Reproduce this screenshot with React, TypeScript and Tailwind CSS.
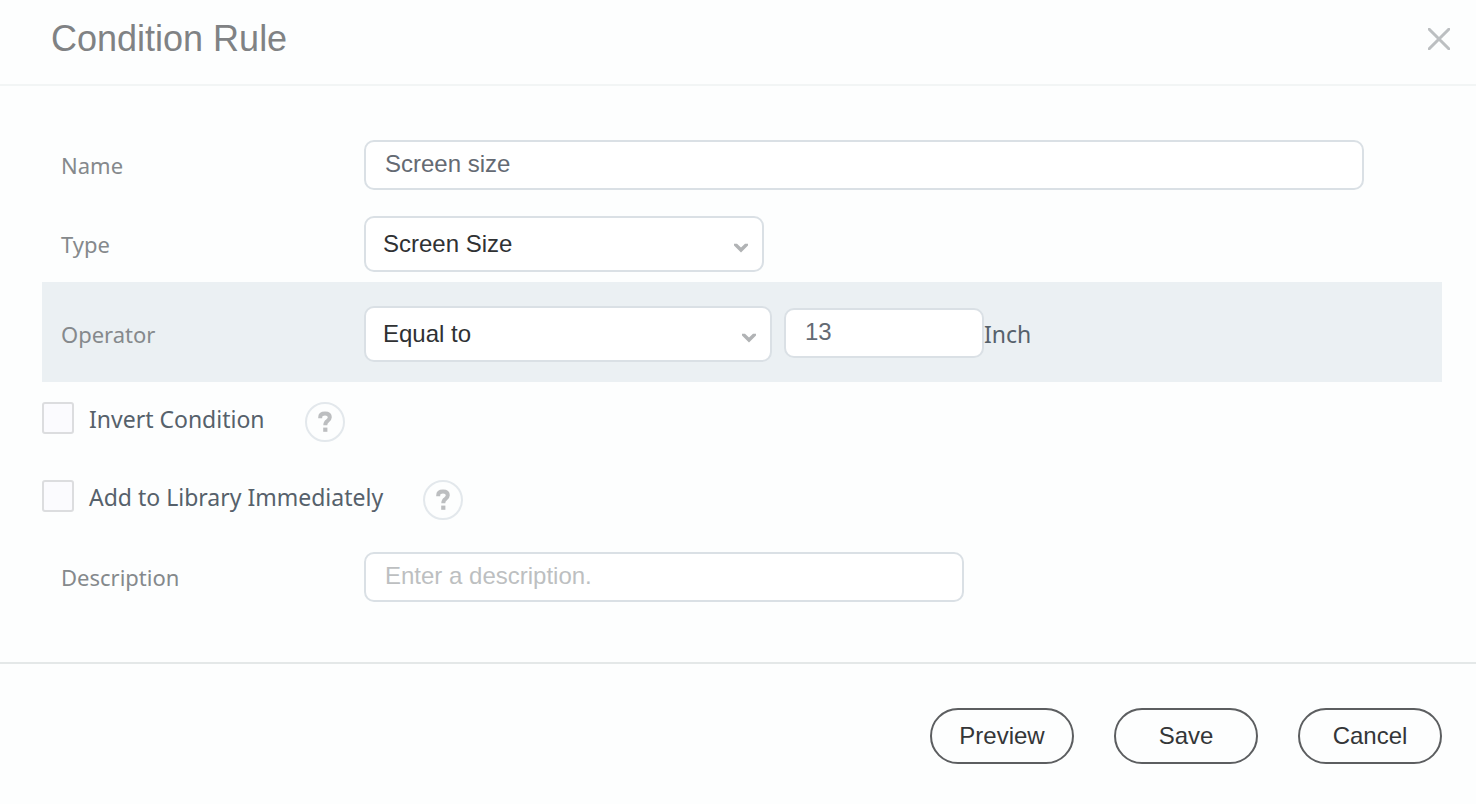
import React from 'react';

const labelFont = "font-['Noto_Sans',sans-serif]";

const inputClass =
  'h-[50px] min-w-0 rounded-[10px] border-2 border-[#dae0e5] bg-white px-[19px] pb-0.5 text-2xl text-[#646a73] placeholder:text-[#bdbfc1] placeholder:opacity-100 outline-none focus:border-[#b4c0c9]';

interface FieldLabelProps {
  htmlFor: string;
  children: React.ReactNode;
}

const FieldLabel: React.FC<FieldLabelProps> = ({ htmlFor, children }) => (
  <label
    htmlFor={htmlFor}
    className={`${labelFont} w-[303px] shrink-0 text-[22px] leading-8 text-[#85898c]`}
  >
    {children}
  </label>
);

interface SelectFieldProps {
  id: string;
  options: string[];
  className: string;
}

const SelectField: React.FC<SelectFieldProps> = ({ id, options, className }) => (
  <div className={`relative min-w-0 ${className}`}>
    <select
      id={id}
      className="h-14 w-full appearance-none rounded-[10px] border-2 border-[#dae0e5] bg-white pl-[17px] pr-12 text-2xl text-[#2f3133] outline-none focus:border-[#b4c0c9]"
    >
      {options.map((option) => (
        <option key={option}>{option}</option>
      ))}
    </select>
    <svg
      viewBox="0 0 16 10"
      className="pointer-events-none absolute right-[15px] top-[27px] h-2.5 w-4"
      aria-hidden="true"
    >
      <path d="M1 0.800H4L8 4.600 12 0.800H15V2.600L8 9.400 1 2.600Z" fill="#b1b3b5" />
    </svg>
  </div>
);

interface CheckRowProps {
  id: string;
  label: string;
  helpLabel: string;
}

const CheckRow: React.FC<CheckRowProps> = ({ id, label, helpLabel }) => (
  <div className="flex h-10 items-start">
    <input
      id={id}
      type="checkbox"
      className="h-8 w-8 shrink-0 appearance-none rounded-[3px] border-2 border-[#dcdddf] bg-[#fbfbfe] checked:bg-[#646a73]"
    />
    <label
      htmlFor={id}
      className={`${labelFont} ml-[15px] mr-10 text-[23px] leading-[34px] text-[#56616b]`}
    >
      {label}
    </label>
    <button
      type="button"
      aria-label={helpLabel}
      className="flex h-10 w-10 shrink-0 items-center justify-center rounded-full border-2 border-[#e3e8ec] bg-[#fdfefe]"
    >
      <svg viewBox="0 0 14 22" className="h-[22px] w-3.5" fill="none" aria-hidden="true">
        <path
          d="M2.200 7.200V6.500C2.200 3.800 4.200 2.600 7 2.600s4.800 1.300 4.800 3.700c0 2-1.100 2.900-2.500 3.900C7.800 11.200 7.300 12 7.300 14.200"
          stroke="#bcbec0"
          strokeWidth="4"
        />
        <rect x="5.200" y="16.600" width="4.200" height="4.200" fill="#bcbec0" />
      </svg>
    </button>
  </div>
);

const footerButtons = ['Preview', 'Save', 'Cancel'];

export default function App() {
  return (
    <div className="min-h-screen bg-[#fdfefe] font-['Liberation_Sans',Arial,sans-serif]">
      <header className="flex items-start justify-between border-b-2 border-[#f2f5f5] pb-[22px] pl-[51px] pr-6 pt-4">
        <h1 className="text-4xl leading-[46px] text-[#808284]">Condition Rule</h1>
        <button type="button" aria-label="Close" className="mt-2.5 p-0.5">
          <svg
            viewBox="0 0 22 22"
            className="h-[22px] w-[22px]"
            fill="none"
            stroke="#bcbfc1"
            strokeWidth="3"
            strokeLinecap="round"
            aria-hidden="true"
          >
            <path d="M1.200 1.200 20.800 20.800M20.800 1.200 1.200 20.800" />
          </svg>
        </button>
      </header>

      <form onSubmit={(e) => e.preventDefault()}>
        <div className="pb-[60px] pl-[42px] pr-[34px] pt-[54px]">
          <div className="flex items-center pl-[19px]">
            <FieldLabel htmlFor="name">Name</FieldLabel>
            <input
              id="name"
              type="text"
              defaultValue="Screen size"
              className={`${inputClass} mr-[78px] flex-1`}
            />
          </div>

          <div className="mt-[26px] flex items-center pl-[19px]">
            <FieldLabel htmlFor="type">Type</FieldLabel>
            <SelectField
              id="type"
              options={['Screen Size', 'Operating System', 'Device']}
              className="w-[400px]"
            />
          </div>

          <div className="mt-2.5 flex h-[100px] items-center bg-[#ebf0f3] pb-1 pl-[19px] pt-2">
            <FieldLabel htmlFor="operator">Operator</FieldLabel>
            <SelectField
              id="operator"
              options={['Equal to', 'Greater than', 'Less than']}
              className="w-[408px]"
            />
            <input
              type="text"
              aria-label="Screen size in inches"
              defaultValue="13"
              className={`${inputClass} mb-0.5 ml-3 w-[200px]`}
            />
            <span className={`${labelFont} text-[23px] leading-8 text-[#56616b]`}>
              Inch
            </span>
          </div>

          <div className="mt-5 flex flex-col gap-[38px]">
            <CheckRow
              id="invert"
              label="Invert Condition"
              helpLabel="Help for Invert Condition"
            />
            <CheckRow
              id="library"
              label="Add to Library Immediately"
              helpLabel="Help for Add to Library Immediately"
            />
          </div>

          <div className="mt-8 flex items-center pl-[19px]">
            <FieldLabel htmlFor="description">Description</FieldLabel>
            <input
              id="description"
              type="text"
              placeholder="Enter a description."
              className={`${inputClass} w-[600px]`}
            />
          </div>
        </div>

        <footer className="flex justify-end gap-10 border-t-2 border-[#e4e8e8] pb-10 pr-[34px] pt-11">
          {footerButtons.map((text) => (
            <button
              key={text}
              type="button"
              className="h-14 w-36 rounded-full border-2 border-[#5c5e60] text-2xl text-[#343638]"
            >
              {text}
            </button>
          ))}
        </footer>
      </form>
    </div>
  );
}
